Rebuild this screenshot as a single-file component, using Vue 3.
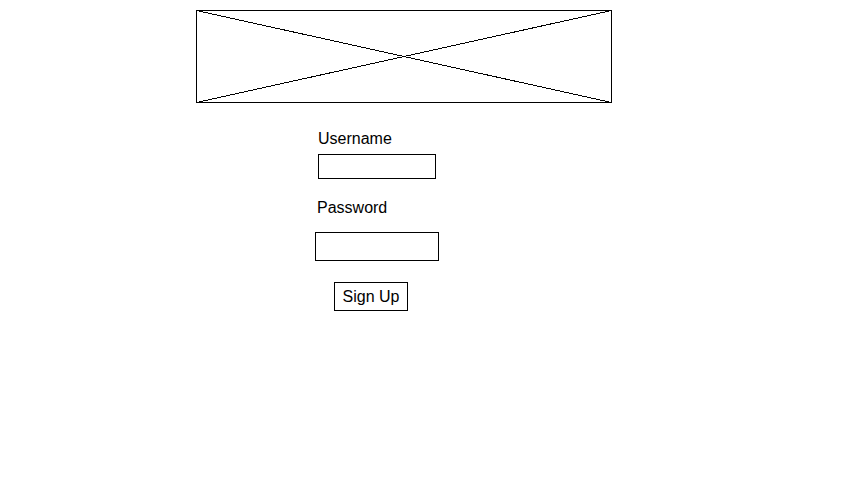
<script setup>
import { ref } from 'vue'

const username = ref('')
const password = ref('')
</script>

<template>
  <main class="page">
    <div class="content">
      <svg class="banner" viewBox="0 0 416 93" preserveAspectRatio="none" role="img" aria-label="Banner placeholder">
        <rect x="0.5" y="0.5" width="415" height="92" />
        <path d="M0.5 0.5 L415.5 92.5 M0.5 92.5 L415.5 0.5" />
      </svg>
      <form class="form" @submit.prevent>
        <div class="field field-username">
          <label for="username">Username</label>
          <input id="username" v-model="username" type="text" autocomplete="username" />
        </div>
        <div class="field field-password">
          <label for="password">Password</label>
          <input id="password" v-model="password" type="password" autocomplete="new-password" />
        </div>
        <button type="submit">Sign Up</button>
      </form>
    </div>
  </main>
</template>

<style>
body {
  background: #fff;
}
</style>

<style scoped>
.page {
  display: flex;
  justify-content: center;
  padding: 10px 39px 10px 0;
  color: #000;
  font-family: "Liberation Sans", Arial, sans-serif;
  font-size: 16px;
  line-height: 20px;
}

.content {
  width: 100%;
  max-width: 416px;
}

.banner {
  display: block;
  width: 100%;
  fill: none;
  stroke: #000;
  stroke-width: 1px;
  shape-rendering: crispEdges;
}

.form {
  display: flex;
  flex-direction: column;
  width: 124px;
  padding-top: 26px;
  margin-left: 119px;
}

.field {
  display: flex;
  flex-direction: column;
}

.field-username {
  gap: 5px;
  padding: 0 3px;
  margin-bottom: 19px;
}

.field-password {
  gap: 14px;
  margin-bottom: 21px;
}

.field-password label {
  padding-left: 2px;
}

input,
button {
  box-sizing: border-box;
  border: 1px solid #000;
  border-radius: 0;
  background: #fff;
  color: inherit;
  font: inherit;
}

input {
  width: 100%;
  height: 25px;
  padding: 0 4px;
}

.field-password input {
  height: 29px;
}

button {
  align-self: flex-start;
  width: 74px;
  height: 29px;
  padding: 0;
  margin-left: 19px;
}
</style>
